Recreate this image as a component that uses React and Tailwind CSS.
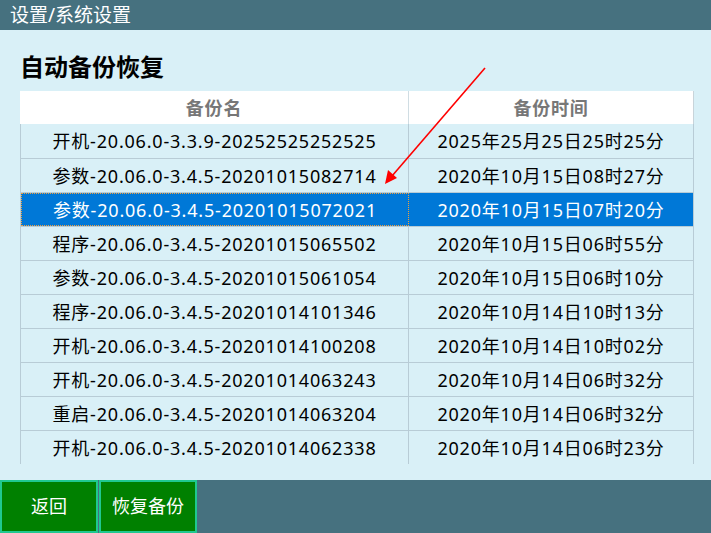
import React from 'react'

const rows = [
  ['开机-20.06.0-3.3.9-20252525252525', '2025年25月25日25时25分'],
  ['参数-20.06.0-3.4.5-20201015082714', '2020年10月15日08时27分'],
  ['参数-20.06.0-3.4.5-20201015072021', '2020年10月15日07时20分'],
  ['程序-20.06.0-3.4.5-20201015065502', '2020年10月15日06时55分'],
  ['参数-20.06.0-3.4.5-20201015061054', '2020年10月15日06时10分'],
  ['程序-20.06.0-3.4.5-20201014101346', '2020年10月14日10时13分'],
  ['开机-20.06.0-3.4.5-20201014100208', '2020年10月14日10时02分'],
  ['开机-20.06.0-3.4.5-20201014063243', '2020年10月14日06时32分'],
  ['重启-20.06.0-3.4.5-20201014063204', '2020年10月14日06时32分'],
  ['开机-20.06.0-3.4.5-20201014062338', '2020年10月14日06时23分'],
]

const font = { fontFamily: '"Noto Sans", "Noto Sans CJK SC", sans-serif' }

export default function App() {
  const selected = 2
  return (
    <div className="w-[711px] h-[533px] flex flex-col bg-[#d9f0f7] overflow-hidden relative" style={font}>
      {/* Header */}
      <div className="h-[30px] bg-[#46717f] flex items-center px-[10px] text-white text-[19px] leading-none">
        设置/系统设置
      </div>

      <div className="flex-1 flex flex-col px-[20px] pt-[25px]">
        <h1 className="text-[24px] font-bold leading-none text-black mb-[12px]">自动备份恢复</h1>

        <div className="w-[674px] text-[18px] leading-none tracking-[0.8px]">
          <div className="flex h-[33px] bg-white text-[#777] font-bold border-r border-[#c8d4da]">
            <div className="w-[389px] flex items-center justify-center border-r border-[#d0dde3]">备份名</div>
            <div className="flex-1 flex items-center justify-center">备份时间</div>
          </div>
          <div className="border-l border-r border-[#b8ccd6]">
            {rows.map((r, i) => (
              <div
                key={i}
                className={
                  i === selected
                    ? 'flex h-[34px] bg-[#0078d7] text-white border-t border-[#b8ccd6]'
                    : i === 0
                      ? 'flex h-[34px] text-black'
                      : 'flex h-[34px] text-black border-t border-[#b8ccd6]'
                }
              >
                <div
                  className={
                    i === selected
                      ? 'w-[388px] flex items-center justify-center border border-dotted border-[#f0a040]'
                      : 'w-[388px] flex items-center justify-center border-r border-[#b8ccd6]'
                  }
                >
                  {r[0]}
                </div>
                <div className="flex-1 flex items-center justify-center">{r[1]}</div>
              </div>
            ))}
          </div>
        </div>
      </div>

      {/* Bottom bar */}
      <div className="h-[53px] bg-[#46717f] flex">
        <button className="w-[98px] h-full bg-[#008000] border-2 border-[#20c890] text-white text-[18px]">返回</button>
        <button className="w-[98px] h-full bg-[#008000] border-2 border-[#20c890] text-white text-[18px] ml-[1px]">恢复备份</button>
      </div>

      {/* Red annotation arrow */}
      <svg className="absolute left-0 top-0 pointer-events-none" width="711" height="533">
        <line x1="485" y1="68" x2="392" y2="176" stroke="#ff0000" strokeWidth="1.6" />
        <polygon points="385,184 388,170 397,178" fill="#ff0000" />
      </svg>
    </div>
  )
}
